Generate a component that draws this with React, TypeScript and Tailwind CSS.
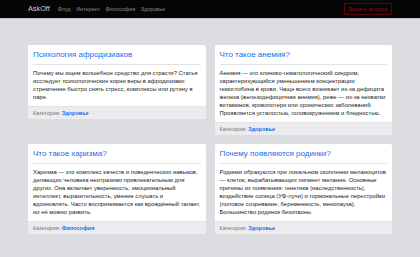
const posts = [
  {
    title: "Психология афродизиаков",
    text: "Почему мы ищем волшебное средство для страсти? Статья исследует психологические корни веры в афродизиаки: стремление быстро снять стресс, комплексы или рутину в паре.",
    category: "Здоровье",
  },
  {
    title: "Что такое анемия?",
    text: "Анемия — это клинико-гематологический синдром, характеризующийся уменьшением концентрации гемоглобина в крови. Чаще всего возникает из-за дефицита железа (железодефицитная анемия), реже — из-за нехватки витаминов, кровопотери или хронических заболеваний. Проявляется усталостью, головокружением и бледностью.",
    category: "Здоровье",
  },
  {
    title: "Что такое харизма?",
    text: "Харизма — это комплекс качеств и поведенческих навыков, делающих человека неотразимо привлекательным для других. Она включает уверенность, эмоциональный интеллект, выразительность, умение слушать и вдохновлять. Часто воспринимается как врождённый талант, но её можно развить.",
    category: "Философия",
  },
  {
    title: "Почему появляются родинки?",
    text: "Родинки образуются при локальном скоплении меланоцитов — клеток, вырабатывающих пигмент меланин. Основные причины их появления: генетика (наследственность), воздействие солнца (УФ-лучи) и гормональные перестройки (половое созревание, беременность, менопауза). Большинство родинок безопасны.",
    category: "Здоровье",
  },
];

const links = ["Флуд", "Интернет", "Философия", "Здоровье"];

export default function App() {
  return (
    <div className="min-h-[257px] bg-[#dcdde0] font-['Liberation_Sans',Arial,sans-serif]">
      <header className="bg-[#050505] border-b border-[#c4c5c8]">
        <div className="mx-[28px] h-[18px] flex items-center">
          <span className="text-[7.3px] text-[#d0d0d0] mr-[8px]">AskOff</span>
          <nav className="flex gap-[5.6px]">
            {links.map((l) => (
              <a key={l} className="text-[5.45px] text-[#8a8a8a]">
                {l}
              </a>
            ))}
          </nav>
          <button className="ml-auto h-[12px] px-[3.5px] border border-[#5a0a0a] rounded-[1px] text-[5.8px] text-[#8a1010]">
            Задать вопрос
          </button>
        </div>
      </header>

      <main className="mx-[28px] pt-[26px] pb-[10px] grid grid-cols-2 gap-[9px] items-start">
        {posts.map((p) => (
          <article key={p.title} className="bg-white rounded-[2px] overflow-hidden">
            <div className="px-[5px] pt-[5px] pb-[5px]">
              <h2 className="text-[8px] leading-[10px] text-[#1a6be8]">{p.title}</h2>
              <div className="mt-[4px] mb-[4px] h-px bg-[#e2e2e2]" />
              <p className="text-[5.88px] leading-[8px] text-[#222]">{p.text}</p>
            </div>
            <div className="bg-[#ececee] border-t border-[#e4e4e6] px-[5px] h-[13px] flex items-center text-[5.5px] text-[#707070]">
              Категория:&nbsp;
              <a className="text-[#1a6be8] font-semibold">{p.category}</a>
            </div>
          </article>
        ))}
      </main>
    </div>
  );
}
